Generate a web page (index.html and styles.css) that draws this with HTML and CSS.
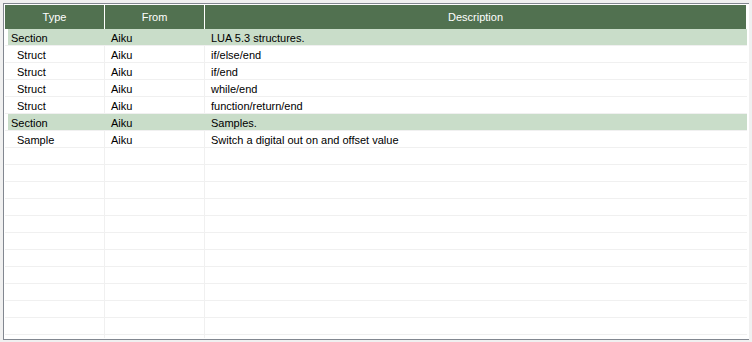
FILE: index.html
```html
<!DOCTYPE html>
<html lang="en">
<head>
    <meta charset="UTF-8">
    <title>Snippets</title>
    <link rel="stylesheet" href="styles.css">
</head>
<body>
    <div class="grid-frame">
        <div class="grid">
            <div class="head">
                <div class="col col-type">Type</div>
                <div class="col col-from">From</div>
                <div class="col col-desc">Description</div>
            </div>
            <div class="rows">
                <div class="row section"><div class="cell">Section</div><div class="cell">Aiku</div><div class="cell">LUA 5.3 structures.</div></div>
                <div class="row"><div class="cell child">Struct</div><div class="cell">Aiku</div><div class="cell">if/else/end</div></div>
                <div class="row"><div class="cell child">Struct</div><div class="cell">Aiku</div><div class="cell">if/end</div></div>
                <div class="row"><div class="cell child">Struct</div><div class="cell">Aiku</div><div class="cell">while/end</div></div>
                <div class="row"><div class="cell child">Struct</div><div class="cell">Aiku</div><div class="cell">function/return/end</div></div>
                <div class="row section"><div class="cell">Section</div><div class="cell">Aiku</div><div class="cell">Samples.</div></div>
                <div class="row"><div class="cell child">Sample</div><div class="cell">Aiku</div><div class="cell">Switch a digital out on and offset value</div></div>
                <!-- empty rows to fill the grid -->
                <div class="row"><div class="cell"></div><div class="cell"></div><div class="cell"></div></div>
                <div class="row"><div class="cell"></div><div class="cell"></div><div class="cell"></div></div>
                <div class="row"><div class="cell"></div><div class="cell"></div><div class="cell"></div></div>
                <div class="row"><div class="cell"></div><div class="cell"></div><div class="cell"></div></div>
                <div class="row"><div class="cell"></div><div class="cell"></div><div class="cell"></div></div>
                <div class="row"><div class="cell"></div><div class="cell"></div><div class="cell"></div></div>
                <div class="row"><div class="cell"></div><div class="cell"></div><div class="cell"></div></div>
                <div class="row"><div class="cell"></div><div class="cell"></div><div class="cell"></div></div>
                <div class="row"><div class="cell"></div><div class="cell"></div><div class="cell"></div></div>
                <div class="row"><div class="cell"></div><div class="cell"></div><div class="cell"></div></div>
                <div class="row"><div class="cell"></div><div class="cell"></div><div class="cell"></div></div>
                <div class="row"><div class="cell"></div><div class="cell"></div><div class="cell"></div></div>
            </div>
        </div>
    </div>
</body>
</html>
```

FILE: styles.css
```css
body {
    margin: 3px;
    background: #f0f0f0;
    font-family: 'Liberation Sans', Arial, sans-serif;
    font-size: 11px;
    color: #000;
}

.grid-frame {
    width: 744px;
    height: 334px;
    border: 1px solid #828790;
    background: #fff;
    padding: 1px 1px 0 1px;
    box-sizing: content-box;
    overflow: hidden;
}

.grid {
    width: 742px;
    height: 333px;
    display: flex;
    flex-direction: column;
    overflow: hidden;
}

.head {
    display: grid;
    grid-template-columns: 100px 100px 1fr;
    height: 24px;
    margin-right: 1px;
    background: #517150;
    color: #fff;
}

.col {
    line-height: 24px;
    text-align: center;
    border-right: 1px solid #fff;
}

.col-desc {
    border-right: none;
}

.rows {
    flex: 1;
    overflow: hidden;
}

.row {
    display: grid;
    grid-template-columns: 100px 100px 1fr;
    height: 16px;
    border-bottom: 1px solid #f0f0f0;
}

.cell {
    line-height: 18px;
    padding-left: 6px;
    border-right: 1px solid #f0f0f0;
    white-space: nowrap;
    overflow: hidden;
}

.cell:last-child {
    border-right: none;
}

.cell.child {
    padding-left: 12px;
}

.row.section .cell {
    background: #c9ddc9;
    border-right-color: #c9ddc9;
}

.row.section .cell:first-child {
    background: linear-gradient(to right, #fff 3px, #c9ddc9 3px);
}
```
